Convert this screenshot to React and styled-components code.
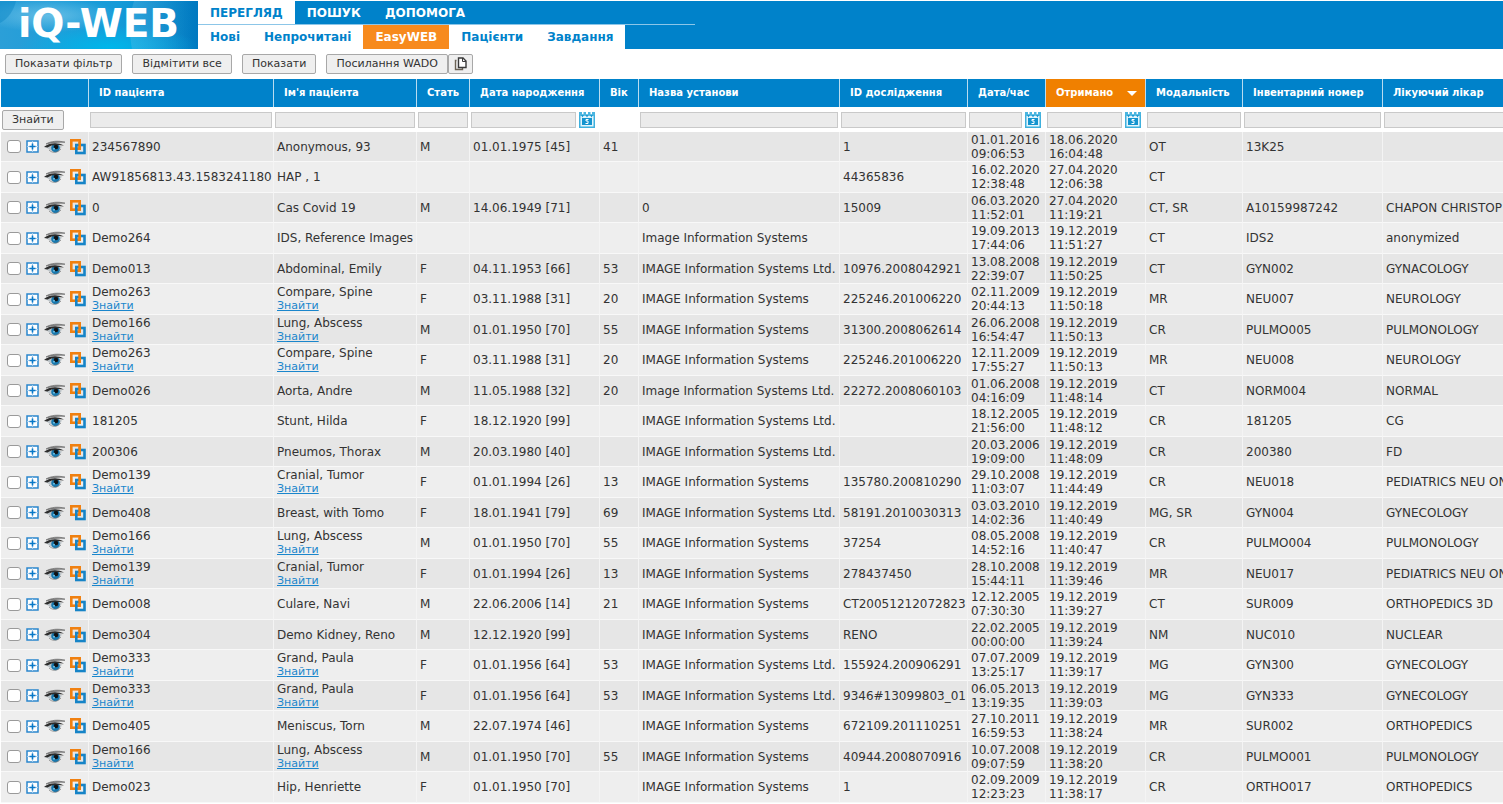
import styled, { createGlobalStyle } from "styled-components";

const columns = [
  { name: "ID пацієнта", width: 185, filter: true },
  { name: "Ім'я пацієнта", width: 143, filter: true },
  { name: "Стать", width: 53, filter: true },
  { name: "Дата народження", width: 130, filter: true, date: true },
  { name: "Вік", width: 39 },
  { name: "Назва установи", width: 201, filter: true },
  { name: "ID дослідження", width: 128, filter: true },
  { name: "Дата/час", width: 78, filter: true, date: true },
  { name: "Отримано", width: 100, filter: true, date: true, sorted: true },
  { name: "Модальність", width: 97, filter: true },
  { name: "Інвентарний номер", width: 140, filter: true },
  { name: "Лікуючий лікар", filter: true },
];

const IIS = "IMAGE Information Systems";
const LTD = "IMAGE Information Systems Ltd.";

// id, name, sex, birth date, age, institution, study id, study time, received, modality, accession, physician, has more studies
const studies = [
  ["234567890", "Anonymous, 93", "M", "01.01.1975 [45]", "41", "", "1", "01.01.2016 09:06:53", "18.06.2020 16:04:48", "OT", "13K25", ""],
  ["AW91856813.43.1583241180", "HAP , 1", "", "", "", "", "44365836", "16.02.2020 12:38:48", "27.04.2020 12:06:38", "CT", "", ""],
  ["0", "Cas Covid 19", "M", "14.06.1949 [71]", "", "0", "15009", "06.03.2020 11:52:01", "27.04.2020 11:19:21", "CT, SR", "A10159987242", "CHAPON CHRISTOP"],
  ["Demo264", "IDS, Reference Images", "", "", "", "Image Information Systems", "", "19.09.2013 17:44:06", "19.12.2019 11:51:27", "CT", "IDS2", "anonymized"],
  ["Demo013", "Abdominal, Emily", "F", "04.11.1953 [66]", "53", LTD, "10976.2008042921", "13.08.2008 22:39:07", "19.12.2019 11:50:25", "CT", "GYN002", "GYNACOLOGY"],
  ["Demo263", "Compare, Spine", "F", "03.11.1988 [31]", "20", IIS, "225246.201006220", "02.11.2009 20:44:13", "19.12.2019 11:50:18", "MR", "NEU007", "NEUROLOGY", true],
  ["Demo166", "Lung, Abscess", "M", "01.01.1950 [70]", "55", IIS, "31300.2008062614", "26.06.2008 16:54:47", "19.12.2019 11:50:13", "CR", "PULMO005", "PULMONOLOGY", true],
  ["Demo263", "Compare, Spine", "F", "03.11.1988 [31]", "20", IIS, "225246.201006220", "12.11.2009 17:55:27", "19.12.2019 11:50:13", "MR", "NEU008", "NEUROLOGY", true],
  ["Demo026", "Aorta, Andre", "M", "11.05.1988 [32]", "20", "Image Information Systems Ltd.", "22272.2008060103", "01.06.2008 04:16:09", "19.12.2019 11:48:14", "CT", "NORM004", "NORMAL"],
  ["181205", "Stunt, Hilda", "F", "18.12.1920 [99]", "", LTD, "", "18.12.2005 21:56:00", "19.12.2019 11:48:12", "CR", "181205", "CG"],
  ["200306", "Pneumos, Thorax", "M", "20.03.1980 [40]", "", LTD, "", "20.03.2006 19:09:00", "19.12.2019 11:48:09", "CR", "200380", "FD"],
  ["Demo139", "Cranial, Tumor", "F", "01.01.1994 [26]", "13", IIS, "135780.200810290", "29.10.2008 11:03:07", "19.12.2019 11:44:49", "CR", "NEU018", "PEDIATRICS NEU ON", true],
  ["Demo408", "Breast, with Tomo", "F", "18.01.1941 [79]", "69", LTD, "58191.2010030313", "03.03.2010 14:02:36", "19.12.2019 11:40:49", "MG, SR", "GYN004", "GYNECOLOGY"],
  ["Demo166", "Lung, Abscess", "M", "01.01.1950 [70]", "55", IIS, "37254", "08.05.2008 14:52:16", "19.12.2019 11:40:47", "CR", "PULMO004", "PULMONOLOGY", true],
  ["Demo139", "Cranial, Tumor", "F", "01.01.1994 [26]", "13", IIS, "278437450", "28.10.2008 15:44:11", "19.12.2019 11:39:46", "MR", "NEU017", "PEDIATRICS NEU ON", true],
  ["Demo008", "Culare, Navi", "M", "22.06.2006 [14]", "21", IIS, "CT20051212072823", "12.12.2005 07:30:30", "19.12.2019 11:39:27", "CT", "SUR009", "ORTHOPEDICS 3D"],
  ["Demo304", "Demo Kidney, Reno", "M", "12.12.1920 [99]", "", IIS, "RENO", "22.02.2005 00:00:00", "19.12.2019 11:39:24", "NM", "NUC010", "NUCLEAR"],
  ["Demo333", "Grand, Paula", "F", "01.01.1956 [64]", "53", LTD, "155924.200906291", "07.07.2009 13:25:17", "19.12.2019 11:39:17", "MG", "GYN300", "GYNECOLOGY", true],
  ["Demo333", "Grand, Paula", "F", "01.01.1956 [64]", "53", LTD, "9346#13099803_01", "06.05.2013 13:19:35", "19.12.2019 11:39:03", "MG", "GYN333", "GYNECOLOGY", true],
  ["Demo405", "Meniscus, Torn", "M", "22.07.1974 [46]", "", IIS, "672109.201110251", "27.10.2011 16:59:53", "19.12.2019 11:38:24", "MR", "SUR002", "ORTHOPEDICS"],
  ["Demo166", "Lung, Abscess", "M", "01.01.1950 [70]", "55", IIS, "40944.2008070916", "10.07.2008 09:07:59", "19.12.2019 11:38:20", "CR", "PULMO001", "PULMONOLOGY", true],
  ["Demo023", "Hip, Henriette", "F", "01.01.1950 [70]", "", IIS, "1", "02.09.2009 12:23:23", "19.12.2019 11:38:17", "CR", "ORTHO017", "ORTHOPEDICS"],
];

const CopyIcon = () => (
  <svg width="13" height="14" viewBox="0 0 13 14" aria-hidden="true">
    <path d="M2.5 3.500H1.500v9h7v-1.500" fill="none" stroke="#6b6255" strokeWidth="1.400" />
    <path d="M4.500 1h4.500l3 3v6.500H4.500z" fill="#fff" stroke="#3a3a3a" strokeWidth="1.400" />
    <path d="M8.500 1v3.500H12" fill="none" stroke="#3a3a3a" />
  </svg>
);

const CalendarIcon = () => (
  <svg width="16" height="16" viewBox="0 0 16 16" aria-hidden="true">
    <rect x=".75" y="3" width="14.500" height="12.250" fill="#e4f5fc" stroke="#3fb0dd" strokeWidth="1.500" />
    <path d="M0 0h3v3H0zM4.500 0h2.500v3H4.500zM9 0h2.500v3H9zM13 0h3v3h-3z" fill="#4ab5e0" />
    <path d="M2 3l1.500 2.500L5 3zM6.500 3L8 5.500 9.500 3zM11 3l1.500 2.500L14 3z" fill="#1b9ad2" />
    <rect x="3" y="6" width="10" height="7" fill="#1494cf" />
    <path d="M9.500 7.500H7v1.500h2v2.500H6.500" fill="none" stroke="#fff" />
  </svg>
);

const PlusIcon = () => (
  <svg width="13" height="13" viewBox="0 0 13 13" aria-hidden="true">
    <rect x="1" y="1" width="11" height="11" fill="#fff" stroke="#2a86cd" strokeWidth="1.500" />
    <path d="M6.500 1v11M1 6.500h11" stroke="#a9cdec" />
    <path d="M6.500 3.500v6M3.500 6.500h6" stroke="#0878c8" strokeWidth="1.600" />
  </svg>
);

const EyeIcon = () => (
  <svg width="21" height="14" viewBox="0 0 21 14" aria-hidden="true">
    <path d="M2 7.500C6 4.500 12 4 18 6.500c-2 4-8 6-12 3.500C4.500 9 3.500 8 2 7.500z" fill="#bcc4c9" />
    <circle cx="11.500" cy="8" r="4.300" fill="#1878ae" />
    <circle cx="12" cy="7" r="2.300" fill="#101214" />
    <circle cx="10" cy="8.800" r="1" fill="#6fc0e4" />
    <path d="M0 7C4 3 13 1.500 20 5.500 14 4.500 7 4.500 3.500 7.500z" fill="#2c2c2c" />
    <path d="M2 4C7 1 14 .500 21 2.200 14 2 8 2.500 2 4z" fill="#777" stroke="#777" strokeWidth=".800" />
    <path d="M5 10c3 3 8 3.500 12-1" fill="none" stroke="#777" strokeWidth=".700" />
  </svg>
);

const ChainIcon = () => (
  <svg width="16" height="16" viewBox="0 0 16 16" aria-hidden="true">
    <rect x="1.300" y="1.300" width="8.400" height="8.400" fill="none" stroke="#f08010" strokeWidth="2.600" />
    <rect x="6.300" y="6" width="8.200" height="8" fill="none" stroke="#1684c7" strokeWidth="2.600" />
    <path d="M9.700 3v6" stroke="#f08010" strokeWidth="2.600" />
  </svg>
);

const LogoArt = () => (
  <svg viewBox="0 0 198 48" preserveAspectRatio="none" aria-hidden="true">
    <defs>
      <linearGradient id="base">
        <stop offset="0" stopColor="#2b9fd8" />
        <stop offset=".6" stopColor="#149bd8" />
        <stop offset="1" stopColor="#0079c0" />
      </linearGradient>
      <radialGradient id="glow" cx=".55" cy=".95" r=".45">
        <stop offset="0" stopColor="#00b6ea" />
        <stop offset="1" stopColor="#00b6ea" stopOpacity="0" />
      </radialGradient>
      <radialGradient id="shine" cx=".25" cy=".3" r=".35">
        <stop offset="0" stopColor="#8fd2ee" stopOpacity=".6" />
        <stop offset="1" stopColor="#8fd2ee" stopOpacity="0" />
      </radialGradient>
      <linearGradient id="sheet">
        <stop offset="0" stopColor="#6cbfe6" stopOpacity=".3" />
        <stop offset="1" stopColor="#6cbfe6" stopOpacity="0" />
      </linearGradient>
    </defs>
    <rect width="198" height="48" fill="url(#base)" />
    <rect width="198" height="48" fill="url(#glow)" />
    <rect width="198" height="48" fill="url(#shine)" />
    <path d="M134 0c-5 16-5 32-2 48h60V0z" fill="url(#sheet)" />
    <path d="M0 22C8 18 14 9 16 0H0z" fill="#0583c2" opacity=".4" />
  </svg>
);

export default function App() {
  return (
    <>
      <GlobalStyle />
      <Header>
        <Logo>
          <LogoArt />
          <span>iQ-WEB</span>
        </Logo>
        <Menus>
          <MainMenu>
            <MenuLink href="#view" $active>ПЕРЕГЛЯД</MenuLink>
            <MenuLink href="#search">ПОШУК</MenuLink>
            <MenuLink href="#help">ДОПОМОГА</MenuLink>
          </MainMenu>
          <MenuLine />
          <SubMenu>
            <SubLink href="#new">Нові</SubLink>
            <SubLink href="#unread">Непрочитані</SubLink>
            <SubLink href="#easyweb" $active>EasyWEB</SubLink>
            <SubLink href="#patients">Пацієнти</SubLink>
            <SubLink href="#tasks">Завдання</SubLink>
          </SubMenu>
        </Menus>
      </Header>

      <Toolbar>
        <Button>Показати фільтр</Button>
        <Button>Відмітити все</Button>
        <Button>Показати</Button>
        <ButtonGroup>
          <Button>Посилання WADO</Button>
          <Button $icon aria-label="Копіювати">
            <CopyIcon />
          </Button>
        </ButtonGroup>
      </Toolbar>

      <TableWrap>
        <Table>
          <colgroup>
            <Col $width={88} />
            {columns.map((c) => (
              <Col key={c.name} $width={c.width} />
            ))}
          </colgroup>
          <thead>
            <tr>
              <HeadCell />
              {columns.map((c) => (
                <HeadCell key={c.name} $sorted={c.sorted}>
                  <HeadLabel>
                    {c.name}
                    {c.sorted && <SortArrow />}
                  </HeadLabel>
                </HeadCell>
              ))}
            </tr>
            <tr>
              <FilterCell>
                <Button>Знайти</Button>
              </FilterCell>
              {columns.map((c) => (
                <FilterCell key={c.name}>
                  {c.filter && (
                    <Filter $date={c.date}>
                      <FilterInput type="text" aria-label={c.name} />
                      {c.date && (
                        <IconButton aria-label="Календар">
                          <CalendarIcon />
                        </IconButton>
                      )}
                    </Filter>
                  )}
                </FilterCell>
              ))}
            </tr>
          </thead>
          <tbody>
            {studies.map((s, i) => (
              <StudyRow key={i} study={s} />
            ))}
          </tbody>
        </Table>
      </TableWrap>
    </>
  );
}

const StudyRow = ({ study }) => {
  const cells = study.slice(0, 12);
  const more = study[12];

  return (
    <Row>
      <Cell>
        <Actions>
          <Check type="checkbox" aria-label={study[0]} />
          <IconButton aria-label="Розгорнути">
            <PlusIcon />
          </IconButton>
          <IconButton aria-label="Переглянути">
            <EyeIcon />
          </IconButton>
          <IconButton aria-label="Порівняти">
            <ChainIcon />
          </IconButton>
        </Actions>
      </Cell>
      {cells.map((text, i) => (
        <Cell key={i} $wrap={i === 7 || i === 8}>
          {text}
          {more && i < 2 && <FindLink href="#find">Знайти</FindLink>}
        </Cell>
      ))}
    </Row>
  );
};

const GlobalStyle = createGlobalStyle`
  * {
    box-sizing: border-box;
  }
  body {
    margin: 0;
    background: #fff;
    color: #333;
    font: 12px/14px Verdana, "DejaVu Sans", sans-serif;
  }
  button, input {
    font: inherit;
    color: inherit;
  }
`;

const Header = styled.header`
  display: flex;
  margin-top: 1px;
  height: 48px;
  background: #0082ca;
`;

const Logo = styled.div`
  display: grid;
  width: 198px;
  color: #fff;
  font-size: 39px;
  font-weight: bold;
  line-height: 46px;
  > * {
    grid-area: 1 / 1;
  }
  svg {
    width: 198px;
    height: 48px;
  }
  span {
    z-index: 1;
    padding-left: 18px;
  }
`;

const Menus = styled.div`
  display: flex;
  flex-direction: column;
  align-items: flex-start;
`;

const MainMenu = styled.nav`
  display: flex;
  height: 23px;
`;

const MenuLink = styled.a`
  padding: 0 12px;
  font-weight: bold;
  line-height: 24px;
  text-decoration: none;
  color: ${(props) => (props.$active ? "#0082ca" : "#fff")};
  background: ${(props) => (props.$active ? "#fff" : "none")};
`;

const MenuLine = styled.div`
  width: 497px;
  height: 1px;
  background: #8cc6e8;
`;

const SubMenu = styled.nav`
  display: flex;
  height: 24px;
  background: #fff;
`;

const SubLink = styled(MenuLink)`
  color: ${(props) => (props.$active ? "#fff" : "#0082ca")};
  background: ${(props) => (props.$active ? "#f78a1d" : "none")};
`;

const Toolbar = styled.div`
  display: flex;
  gap: 10px;
  padding: 5px;
  height: 30px;
`;

const Button = styled.button`
  display: flex;
  align-items: center;
  height: 20px;
  padding: 0 ${(props) => (props.$icon ? "5px" : "9px")};
  border: 1px solid #a8a8a8;
  border-radius: 2px;
  background: #efefef;
  font-size: 11px;
  white-space: nowrap;
`;

const ButtonGroup = styled.div`
  display: flex;
`;

const TableWrap = styled.div`
  overflow: hidden;
`;

const Table = styled.table`
  width: 100%;
  min-width: 1600px;
  table-layout: fixed;
  border-collapse: separate;
  border-spacing: 0;
  padding-left: 1px;
`;

const Col = styled.col`
  width: ${(props) => (props.$width ? `${props.$width}px` : "auto")};
`;

const HeadCell = styled.th`
  height: 28px;
  padding: 0 8px 0 10px;
  border-right: 1px solid #b9dcf0;
  background: ${(props) => (props.$sorted ? "#f08000" : "#0082ca")};
  color: #fff;
  font-size: 10px;
  text-align: left;
  white-space: nowrap;
`;

const HeadLabel = styled.div`
  display: flex;
  align-items: center;
  justify-content: space-between;
`;

const SortArrow = styled.i`
  border: 5px solid transparent;
  border-top: 5px solid #fff;
  border-bottom: 0;
`;

const FilterCell = styled.td`
  height: 25px;
  padding: 0 2px 0 1px;
`;

const Filter = styled.div`
  display: flex;
  align-items: center;
  gap: 3px;
  padding-right: ${(props) => (props.$date ? "3px" : "0")};
`;

const FilterInput = styled.input`
  flex: 1;
  min-width: 0;
  height: 16px;
  padding: 0 2px;
  border: 1px solid #c9c9c9;
  background: #ebebeb;
`;

const IconButton = styled.button`
  display: flex;
  padding: 0;
  border: 0;
  background: none;
`;

const Row = styled.tr`
  height: 30px;
  background: #e6e6e6;
  &:nth-child(even) {
    height: 31px;
    background: #eeeeee;
  }
`;

const Cell = styled.td`
  padding: 0 0 0 3px;
  border-right: 1px solid #f4f4f4;
  border-bottom: 1px solid #f8f8f8;
  vertical-align: middle;
  white-space: ${(props) => (props.$wrap ? "normal" : "nowrap")};
`;

const Actions = styled.div`
  display: flex;
  align-items: center;
  gap: 5px;
  padding-left: 3px;
`;

const Check = styled.input`
  appearance: none;
  width: 14px;
  height: 13px;
  margin: 0;
  border: 1px solid #9a9a9a;
  border-radius: 3px;
  background: #fff;
  &:checked {
    background: #0082ca;
  }
`;

const FindLink = styled.a`
  display: block;
  color: #1a86cc;
  font-size: 11px;
`;
